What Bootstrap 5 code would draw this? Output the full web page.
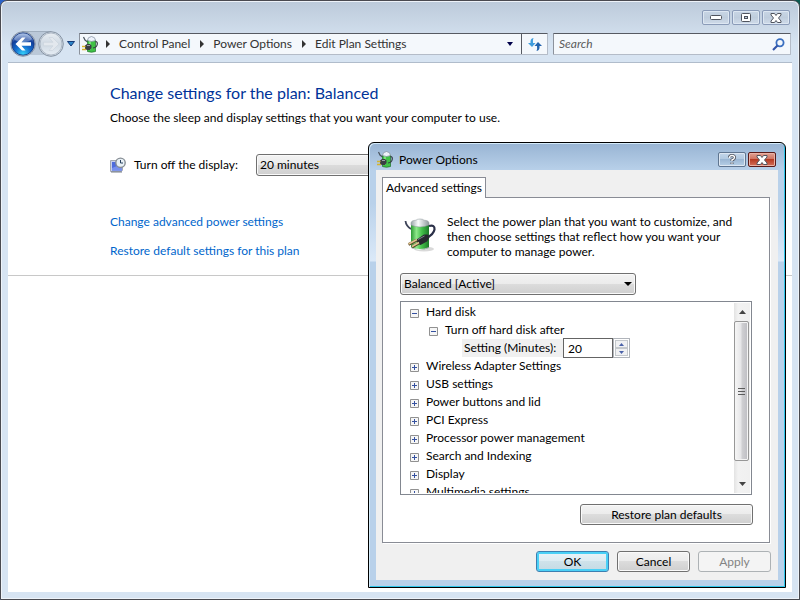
<!DOCTYPE html>
<html lang="en">
<head>
<meta charset="utf-8">
<meta name="viewport" content="width=device-width, initial-scale=1">
<title>Edit Plan Settings</title>
<link href="https://cdn.jsdelivr.net/npm/bootstrap@5.3.0/dist/css/bootstrap.min.css" rel="stylesheet">
<style>
  body {
    font-family: Lato, "Open Sans", sans-serif;
    font-size: 12px;
    line-height: 18px;
    color: #000;
    background: linear-gradient(90deg, #2a62c8, #0c5a50);
  }
  button, input, select { font-family: inherit; font-size: 12px; line-height: 18px; color: #000; }
  button { padding: 0; }
  svg { display: block; flex: none; }

  /* main window */
  .win-frame {
    border: 1px solid #4a4a50;
    border-radius: 7px 7px 0 0;
    box-shadow: inset 0 0 0 1px #eef3f9;
    padding: 0 7px 7px;
    background: #d7e4f2 linear-gradient(#bccada, #d7e4f2 44px) no-repeat;
    background-size: 100% 60px;
  }
  .caption-row { padding: 9px 2px 0 0; gap: 2px; }
  .cap-btn {
    width: 28px; height: 15px;
    border: 1px solid #8a9bb8; border-radius: 2px;
    background: linear-gradient(#c9d6e5, #bfcddd 50%, #cfdbe9);
    box-shadow: inset 0 0 0 1px #dde7f2;
  }
  .nav-row { padding: 6px 1px 5px 0; }
  .bare-btn { border: 0; background: none; }
  .recent-btn { padding: 0 4px 0 2px; }
  .addr-bar, .search-bar {
    height: 22px;
    background: #f4f8fc;
    border: 1px solid #b4bcc8;
    border-top-color: #565a62;
    border-left-color: #8c929c;
    border-radius: 1px;
  }
  .addr-bar { padding-left: 2px; }
  .addr-bar a { color: #333; text-decoration: none; white-space: nowrap; }
  .crumb-gap { margin: 0 8px 0 10px; }
  .search-bar { width: 238px; margin-left: 5px; padding: 0 4px; }
  .search-bar input { border: 0; background: none; outline: 0; font-style: italic; padding: 0 1px; min-width: 0; }
  .search-bar input::placeholder { color: #5c5c5c; opacity: 1; }
  .refresh-btn { width: 26px; height: 20px; border: 0; border-left: 1px solid #565a62; background: none; }
  .page-area { border-top: 1px solid #b0bccb; background: #fff; }
  .plan-area { padding: 19px 0 15px 102px; border-bottom: 1px solid #c8c8c8; }
  .plan-area h1 { font-size: 16px; line-height: 22px; font-weight: 400; color: #039; }
  .plan-area p { margin: 5px 0 27px; }
  .plan-area a { color: #0066cc; text-decoration: none; }
  .plan-links { margin-top: 37px; gap: 11px; }
  .off-label { width: 114px; }
  .off-pick { width: 150px; }

  /* shared controls */
  .aero-btn, .aero-select {
    border: 1px solid #707070; border-radius: 3px;
    background: linear-gradient(#f3f3f3, #ebebeb 50%, #dcdcdc 50%, #cfcfcf);
    box-shadow: inset 0 0 0 1px #fafafa;
  }
  .aero-btn { height: 21px; line-height: 19px; }
  .aero-select { height: 22px; appearance: none; padding: 0 20px 0 3px; width: 100%; outline: 0; }
  .select-wrap { position: relative; }
  .select-wrap svg { position: absolute; right: 4px; top: 9px; pointer-events: none; }
  .aero-btn.is-default {
    border-color: #3c7fb1;
    background: linear-gradient(#eaf3f8, #dcebf2 50%, #cfe2ea 50%, #c4dae4);
    box-shadow: inset 0 0 0 2px #4ad0f6;
  }
  .aero-btn:disabled { color: #838383; border-color: #adb2b5; background: #f4f4f4; box-shadow: none; }

  /* dialog window */
  .dlg {
    position: absolute; right: 14px; top: 142px; width: 418px;
    border: 1px solid #000;
    border-radius: 6px 6px 0 0;
    box-shadow: inset 1px 1px 0 #d4ebfa, inset -1px -1px 0 #2fc6ea;
    padding: 0 7px 7px;
    background: linear-gradient(#98b4d3, #b9d1ea 28px, #b9d1ea 60px, #dbe9f8 118px, #b9d1ea 119px);
  }
  .dlg-title { height: 27px; padding: 6px 2px 0 1px; gap: 2px; }
  .dlg .cap-btn { border-color: #5f7590; background: linear-gradient(#c3d6ea, #b0c8e0 50%, #9bb7d4 50%, #b7cfe6); }
  .dlg .cap-btn.cap-close { border-color: #5a1a18; background: linear-gradient(#e0a193, #cf6f5c 50%, #b63a22 50%, #d4705a); box-shadow: inset 0 0 0 1px #e9b1a4; }
  .dlg-body { background: #f0f0f0; padding: 7px 8px 8px 6px; }
  .tab-btn {
    height: 21px; width: 104px; margin-bottom: -1px; position: relative;
    border: 1px solid #898c95; border-bottom: 0; background: #fff;
    white-space: nowrap;
  }
  .tab-pane-box { border: 1px solid #898c95; background: #fff; padding: 16px 16px 17px 17px; box-shadow: 1px 1px 0 #fff; }
  .intro { line-height: 15px; gap: 11px; padding-left: 4px; margin-bottom: 14px; }
  .plan-pick { width: 236px; }
  .tree-box { border: 1px solid #828790; height: 194px; margin: 6px 1px 9px 0; padding: 1px; overflow: hidden; background: #fff; }
  .tree-list { padding: 0 0 0 8px; overflow: hidden; }
  .tree-list ul { padding-left: 19px; }
  .tree-line { height: 18px; gap: 7px; white-space: nowrap; }
  .tree-line .bare-btn { padding-top: 2px; }
  .setting-tag { background: #f0f0f0; padding: 0 2px; margin-left: 14px; width: 101px; }
  .setting-box { width: 50px; height: 20px; border: 1px solid #646464; padding: 0 4px; border-radius: 0; outline: 0; }
  .spin-col { width: 17px; height: 20px; border: 1px solid #b0b4ba; padding: 1px; background: #fff; }
  .spin-col button { flex: 1; border: 1px solid #c4c8cc; background: #f0f1f3; }
  .scroll-col { width: 16px; background: linear-gradient(90deg, #e3e3e3, #f2f2f2 25%, #f0f0f0); }
  .scroll-col button { height: 18px; }
  .scroll-thumb {
    height: 140px; width: 15px;
    border: 1px solid #979797; border-radius: 2px;
    background: linear-gradient(90deg, #f6f6f6, #e6e6e8 45%, #cfcfd2 55%, #bdbdc2);
    box-shadow: inset 0 0 0 1px #f4f4f4;
  }
  .restore-btn { width: 173px; }
  .foot-row { gap: 8px; margin-top: 8px; margin-right: -1px; }
  .foot-row .aero-btn { width: 73px; }
</style>
<script src="https://cdn.jsdelivr.net/npm/bootstrap@5.3.0/dist/js/bootstrap.bundle.min.js"></script>
</head>
<body>
<svg width="0" height="0" class="position-absolute" aria-hidden="true">
  <defs>
    <linearGradient id="gGreen"><stop offset="0" stop-color="#2c9a34"/><stop offset=".3" stop-color="#8ee88a"/><stop offset=".6" stop-color="#43c04a"/><stop offset="1" stop-color="#1b7a28"/></linearGradient>
    <linearGradient id="gCap"><stop offset="0" stop-color="#9aa5a8"/><stop offset=".4" stop-color="#fafcfc"/><stop offset="1" stop-color="#8e999c"/></linearGradient>
    <radialGradient id="gBack" cx=".5" cy=".95" r=".9"><stop offset="0" stop-color="#35d4fb"/><stop offset=".4" stop-color="#1570cf"/><stop offset=".75" stop-color="#123f9c"/><stop offset="1" stop-color="#7e9fd6"/></radialGradient>
    <linearGradient id="gFwd" x2="0" y2="1"><stop offset="0" stop-color="#e9eef3"/><stop offset=".5" stop-color="#cfd9e3"/><stop offset="1" stop-color="#e6edf4"/></linearGradient>
    <symbol id="iPlug" viewBox="0 0 16 17">
      <path d="M1.500 1L3 4l2.500 2" fill="none" stroke="#4a545e" stroke-width="1.200"/>
      <path d="M5.500 4v11.500q4 1.500 8 0V4z" fill="#3fc246" stroke="#1d6e28" stroke-width=".7"/>
      <path d="M8 5v9" stroke="#8fe88c" stroke-width="1.500"/>
      <path d="M5.500 4.500q0-3.500 4-4 4 .5 4 4-4 2-8 0z" fill="#eef3fb" stroke="#7c8a9c" stroke-width=".7"/>
      <path d="M13.500 5.500q2.200 0 1.700 3T11 12" fill="none" stroke="#333b44" stroke-width="1.200"/>
      <path d="M3 9.500L5 8h3l1.500 1.500v2.500L8 14H5L3 13z" fill="#3a3f44"/>
      <path d="M5 9.500h3" stroke="#9aa2a8"/>
      <path d="M0 10.500h3.500M0 13.500h4" stroke="#d5b52c" stroke-width="1.500"/>
    </symbol>
    <symbol id="iPlus" viewBox="0 0 9 9"><path d="M.5.5h8v8h-8z" fill="#f6f6f6" stroke="#919191"/><path d="M2 4.500h5M4.500 2v5" stroke="#3551a0"/></symbol>
    <symbol id="iMinus" viewBox="0 0 9 9"><path d="M.5.5h8v8h-8z" fill="#f6f6f6" stroke="#919191"/><path d="M2 4.500h5" stroke="#3551a0"/></symbol>
    <symbol id="iCross" viewBox="0 0 12 10"><path d="M1 .5h3.500L6 2.500 7.500.5H11v1.500L8.500 5 11 8v1.500H7.500L6 7.500l-1.500 2H1V8l2.500-3L1 2z" fill="#fff" stroke="#50545e"/></symbol>
    <symbol id="iDown" viewBox="0 0 8 4"><path d="M0 0h8L4 4z"/></symbol>
    <symbol id="iCrumb" viewBox="0 0 5 8"><path d="M0 0l4 4-4 4z" fill="#333"/></symbol>
  </defs>
</svg>

<div class="win-frame min-vh-100 d-flex flex-column">
  <div class="caption-row d-flex justify-content-end">
    <button class="cap-btn d-flex align-items-center justify-content-center" aria-label="Minimize"><svg width="12" height="5"><rect x=".5" y=".5" width="11" height="4" rx="1" fill="#fff" stroke="#50545e"/></svg></button>
    <button class="cap-btn d-flex align-items-center justify-content-center" aria-label="Maximize"><svg width="12" height="9"><rect x="1.500" y=".5" width="9" height="8" rx="1" fill="#fff" stroke="#50545e"/><rect x="4.500" y="3.500" width="3" height="2" fill="#bfcddd" stroke="#50545e"/></svg></button>
    <button class="cap-btn d-flex align-items-center justify-content-center" aria-label="Close"><svg width="12" height="10"><use href="#iCross"/></svg></button>
  </div>

  <div class="nav-row d-flex align-items-center">
    <div class="d-flex align-items-center">
      <button class="bare-btn" aria-label="Back"><svg width="28" height="26"><path d="M14 1h14v23H14z" fill="#bac8d8"/><path d="M14 .5h14" stroke="#a0aebe"/><circle cx="15" cy="13" r="12.300" fill="#d2dde8" stroke="#8592a2"/><circle cx="15" cy="13" r="11.200" fill="url(#gBack)" stroke="#18357a" stroke-width=".8"/><path d="M6 8q3-5.500 9-5.500T24 8q-2 3-9 3T6 8z" fill="#fff" opacity=".32"/><path d="M7.500 13l6.500-6.500h3.500L13.500 11.300H23v3.500h-9.500l4 4.700H14z" fill="#fff"/></svg></button>
      <button class="bare-btn" aria-label="Forward"><svg width="29" height="26"><path d="M0 1h15v23H0z" fill="#bac8d8"/><path d="M0 .5h15" stroke="#a0aebe"/><circle cx="15" cy="13" r="12.300" fill="#d3dde7" stroke="#8592a2"/><circle cx="15" cy="13" r="11" fill="url(#gFwd)" stroke="#a3afbc" stroke-width=".8"/><path d="M23 13l-6.500-6.500H13l4 4.800H7.500v3.500H17l-4 4.700h3.500z" fill="#e3e8ee" stroke="#c4ced8" stroke-width=".5"/></svg></button>
      <button class="bare-btn recent-btn" aria-label="Recent pages"><svg width="8" height="6"><path d="M.5.5h7L4 5z" fill="#2b86c9" stroke="#163a78"/></svg></button>
    </div>
    <div class="addr-bar d-flex align-items-center flex-grow-1">
      <svg width="16" height="17"><use href="#iPlug"/></svg>
      <svg class="mx-2" width="5" height="8"><use href="#iCrumb"/></svg>
      <a href="#">Control Panel</a>
      <svg class="crumb-gap" width="5" height="8"><use href="#iCrumb"/></svg>
      <a href="#">Power Options</a>
      <svg class="crumb-gap" width="5" height="8"><use href="#iCrumb"/></svg>
      <a href="#">Edit Plan Settings</a>
      <button class="bare-btn ms-auto ps-1 pe-2" aria-label="Previous locations"><svg width="6" height="4" viewBox="0 0 8 4" preserveAspectRatio="none" fill="#00004a"><use href="#iDown"/></svg></button>
      <button class="refresh-btn d-flex align-items-center justify-content-center" aria-label="Refresh"><svg width="14" height="13"><path d="M5.500 0Q2 .5 2.500 5H0l4 4 3.500-4H5Q4.500 2 5.500 0z" fill="#3f9ddd"/><path d="M8.500 13q3.500-.5 3-5H14l-4-4-3.500 4H9q.5 3-.5 5z" fill="#2163ae"/></svg></button>
    </div>
    <div class="search-bar d-flex align-items-center">
      <input class="flex-grow-1" type="text" placeholder="Search" aria-label="Search">
      <svg width="14" height="13"><circle cx="8" cy="4.800" r="3.600" fill="#f4f8fc" stroke="#3a6fc0" stroke-width="1.800"/><path d="M5.500 7.500L1 12" stroke="#3355a8" stroke-width="2.200"/></svg>
    </div>
  </div>

  <main class="page-area flex-grow-1">
    <div class="plan-area">
      <h1 class="m-0">Change settings for the plan: Balanced</h1>
      <p>Choose the sleep and display settings that you want your computer to use.</p>
      <div class="d-flex align-items-center">
        <svg width="16" height="16"><path d="M.5 3.500h12v9.500l-1 1.500H.5z" fill="#c8d0ee" stroke="#a4a8b0"/><path d="M2 5h10v8.500H2z" fill="#4f6cdc"/><path d="M2 11l10-4v6.500H2z" fill="#7890ee"/><path d="M1 15h11" stroke="#777e8a"/><circle cx="10.500" cy="5.800" r="4.700" fill="#e9f1f6" stroke="#868d94" stroke-width="1.400"/><path d="M10.500 3v3h2.500" fill="none" stroke="#27405e"/></svg>
        <label class="off-label ms-2" for="displayOff">Turn off the display:</label>
        <div class="select-wrap off-pick ms-2">
          <select class="aero-select d-block" id="displayOff"><option>20 minutes</option></select>
          <svg width="8" height="4"><use href="#iDown"/></svg>
        </div>
      </div>
      <div class="plan-links d-flex flex-column align-items-start">
        <a href="#">Change advanced power settings</a>
        <a href="#">Restore default settings for this plan</a>
      </div>
    </div>
  </main>
</div>

<section class="dlg" role="dialog" aria-label="Power Options">
  <div class="dlg-title d-flex align-items-center">
    <svg width="16" height="17"><use href="#iPlug"/></svg>
    <span class="ms-1 flex-grow-1">Power Options</span>
    <button class="cap-btn d-flex align-items-center justify-content-center" aria-label="Help"><svg width="10" height="11"><path d="M2.500 3.500Q2.500 1.500 5 1.500T7.500 3.500Q7.500 5 5 6v1M5 8.500v1.500" fill="none" stroke="#50545e" stroke-width="3"/><path d="M2.500 4Q2.500 1.500 5 1.500T7.500 3.500Q7.500 5 5 6v1M5 8.500v1.200" fill="none" stroke="#fff" stroke-width="1.400"/></svg></button>
    <button class="cap-btn cap-close d-flex align-items-center justify-content-center" aria-label="Close"><svg width="12" height="10"><use href="#iCross"/></svg></button>
  </div>
  <div class="dlg-body">
    <button class="tab-btn d-block" role="tab" aria-selected="true">Advanced settings</button>
    <div class="tab-pane-box">
      <div class="intro d-flex">
        <svg class="mt-1" width="32" height="34" viewBox="0 0 32 34">
          <ellipse cx="20" cy="31" rx="10" ry="2.500" fill="#000" opacity=".15"/>
          <path d="M1.500 3Q2 8 7 11" fill="none" stroke="#3d4358" stroke-width="1.800"/>
          <path d="M7 5.500v24q9 4.500 18 0v-24z" fill="url(#gGreen)"/>
          <path d="M7 5q0-2.500 5-2.800Q13 1 16 1t4 1.200Q25 2.500 25 5v2q-9 4-18 0z" fill="url(#gCap)" stroke="#8a9598" stroke-width=".5"/>
          <path d="M7 29v1q9 4 18 0v-1q-9 4-18 0z" fill="url(#gCap)"/>
          <path d="M25 8Q31 6.500 30.500 11.500q-1 5-7.500 8" fill="none" stroke="#2b3048" stroke-width="2.200"/>
          <path d="M12 22l8-5.500h4l1.500 3-2.500 4-6.500 3.500-3-1.500z" fill="#26292f"/>
          <path d="M14 21.500l6.500-3.500" stroke="#7b828c" stroke-width="1"/>
          <path d="M13 22L4.500 26.500M15 25l-7 4" stroke="#5a4526" stroke-width="2.800"/>
          <path d="M13 21.500L4.500 26M15 24.500l-7 4" stroke="#dfc592" stroke-width="1.600"/>
        </svg>
        <div>Select the power plan that you want to customize, and<br>then choose settings that reflect how you want your<br>computer to manage power.</div>
      </div>
      <div class="select-wrap plan-pick">
        <select class="aero-select d-block" aria-label="Power plan"><option>Balanced [Active]</option></select>
        <svg width="8" height="4"><use href="#iDown"/></svg>
      </div>
      <div class="tree-box d-flex">
        <ul class="tree-list list-unstyled m-0 flex-grow-1">
          <li>
            <div class="tree-line d-flex align-items-center"><button class="bare-btn" aria-label="Collapse"><svg width="9" height="9"><use href="#iMinus"/></svg></button>Hard disk</div>
            <ul class="list-unstyled">
              <li>
                <div class="tree-line d-flex align-items-center"><button class="bare-btn" aria-label="Collapse"><svg width="9" height="9"><use href="#iMinus"/></svg></button>Turn off hard disk after</div>
                <ul class="list-unstyled">
                  <li class="tree-line d-flex align-items-center gap-0">
                    <label class="setting-tag" for="diskMinutes">Setting (Minutes):</label>
                    <input class="setting-box" id="diskMinutes" type="text" value="20">
                    <div class="spin-col d-flex flex-column">
                      <button class="d-flex align-items-center justify-content-center" aria-label="Increase"><svg width="5" height="3"><path d="M0 3h5L2.500 0z" fill="#4a62a8"/></svg></button>
                      <button class="d-flex align-items-center justify-content-center" aria-label="Decrease"><svg width="5" height="3"><path d="M0 0h5L2.500 3z" fill="#4a62a8"/></svg></button>
                    </div>
                  </li>
                </ul>
              </li>
            </ul>
          </li>
          <li class="tree-line d-flex align-items-center"><button class="bare-btn" aria-label="Expand"><svg width="9" height="9"><use href="#iPlus"/></svg></button>Wireless Adapter Settings</li>
          <li class="tree-line d-flex align-items-center"><button class="bare-btn" aria-label="Expand"><svg width="9" height="9"><use href="#iPlus"/></svg></button>USB settings</li>
          <li class="tree-line d-flex align-items-center"><button class="bare-btn" aria-label="Expand"><svg width="9" height="9"><use href="#iPlus"/></svg></button>Power buttons and lid</li>
          <li class="tree-line d-flex align-items-center"><button class="bare-btn" aria-label="Expand"><svg width="9" height="9"><use href="#iPlus"/></svg></button>PCI Express</li>
          <li class="tree-line d-flex align-items-center"><button class="bare-btn" aria-label="Expand"><svg width="9" height="9"><use href="#iPlus"/></svg></button>Processor power management</li>
          <li class="tree-line d-flex align-items-center"><button class="bare-btn" aria-label="Expand"><svg width="9" height="9"><use href="#iPlus"/></svg></button>Search and Indexing</li>
          <li class="tree-line d-flex align-items-center"><button class="bare-btn" aria-label="Expand"><svg width="9" height="9"><use href="#iPlus"/></svg></button>Display</li>
          <li class="tree-line d-flex align-items-center"><button class="bare-btn" aria-label="Expand"><svg width="9" height="9"><use href="#iPlus"/></svg></button>Multimedia settings</li>
        </ul>
        <div class="scroll-col d-flex flex-column">
          <button class="bare-btn d-flex align-items-center justify-content-center" aria-label="Scroll up"><svg width="7" height="4"><path d="M0 4h7L3.500 0z" fill="#444"/></svg></button>
          <div class="scroll-thumb d-flex align-items-center justify-content-center"><svg width="7" height="9"><path d="M0 1.500h7M0 4.500h7M0 7.500h7" stroke="#5c5c5c"/></svg></div>
          <button class="bare-btn mt-auto d-flex align-items-center justify-content-center" aria-label="Scroll down"><svg width="7" height="4"><path d="M0 0h7L3.500 4z" fill="#444"/></svg></button>
        </div>
      </div>
      <div class="d-flex justify-content-end"><button class="aero-btn restore-btn">Restore plan defaults</button></div>
    </div>
    <div class="foot-row d-flex justify-content-end">
      <button class="aero-btn is-default">OK</button>
      <button class="aero-btn">Cancel</button>
      <button class="aero-btn" disabled>Apply</button>
    </div>
  </div>
</section>
</body>
</html>
